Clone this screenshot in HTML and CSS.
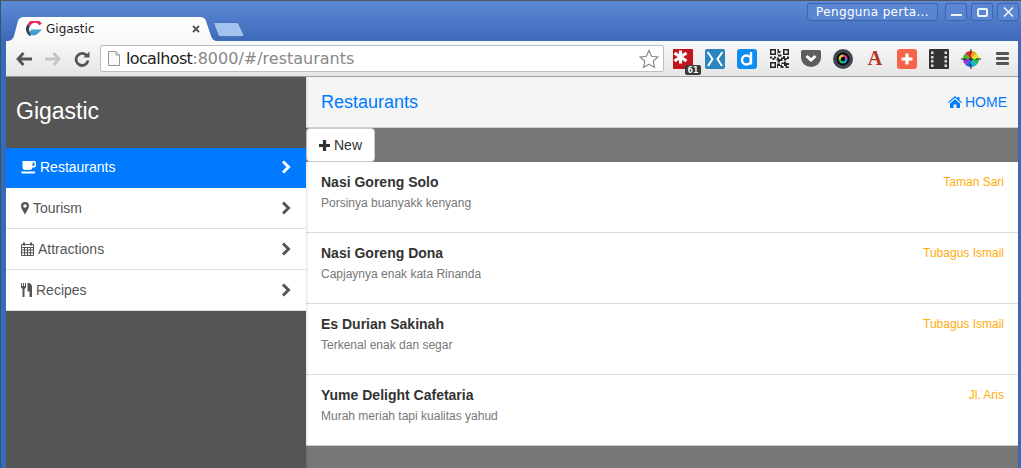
FILE: index.html
```html
<!DOCTYPE html>
<html lang="en">
<head>
  <meta charset="UTF-8">
  <meta name="viewport" content="width=device-width, initial-scale=1.0">
  <title>Gigastic</title>
  <link rel="stylesheet" href="styles.css">
</head>
<body>
  <div class="window">
    <div class="titlebar">
      <div class="tab">
        <svg class="tab-shape" width="212" height="24" viewBox="0 0 212 24">
          <defs>
            <linearGradient id="tabfill" x1="0" y1="0" x2="0" y2="1">
              <stop offset="0" stop-color="#ffffff"/>
              <stop offset="1" stop-color="#f8f8f8"/>
            </linearGradient>
          </defs>
          <path d="M0 24C5 24 7 22 8 19L12 4C13 1 15 0 18 0H194C197 0 199 1 200 4L205 19C206 22 208 24 212 24Z" fill="url(#tabfill)"/>
        </svg>
        <svg class="favicon" width="16" height="16" viewBox="0 0 16 16">
          <path d="M14.5 3.500A6.500 6.500 0 0 0 3 4" fill="none" stroke="#e8265e" stroke-width="3"/>
          <path d="M3 4A6.500 6.500 0 0 0 5 14" fill="none" stroke="#34405c" stroke-width="3"/>
          <path d="M5 8.500H16L12 12.500Q8 16 3.500 13Z" fill="#3f9fd0"/>
        </svg>
        <span class="tab-title">Gigastic</span>
        <svg class="tab-close" width="8" height="8" viewBox="0 0 8 8">
          <path d="M1 1L7 7M7 1L1 7" stroke="#555" stroke-width="1.8"/>
        </svg>
      </div>
      <svg class="new-tab" width="32" height="15" viewBox="0 0 32 15">
        <path d="M2 .5H23C25 .5 25.500 1 26 2.500L30.500 12C31 13.500 30.500 14.500 29 14.500H8C6 14.500 5.500 14 5 12.500L1 2.500C.5 1 .5 .5 2 .5Z" fill="#a3c3ee" stroke="#4a72b8"/>
      </svg>
      <div class="window-controls">
        <div class="user-button">Pengguna perta...</div>
        <div class="win-buttons">
          <div class="win-btn"><span class="win-min"></span></div>
          <div class="win-btn"><span class="win-max"></span></div>
          <div class="win-btn">
            <svg width="11" height="10" viewBox="0 0 11 10"><path d="M1 .5L10 9.500M10 .5L1 9.500" stroke="#eef3fb" stroke-width="1.6"/></svg>
          </div>
        </div>
      </div>
    </div>

    <div class="toolbar">
      <div class="nav-buttons">
        <svg width="16" height="14" viewBox="0 0 16 14"><path d="M7.500 1L2 7L7.500 13M2 7H16" fill="none" stroke="#555" stroke-width="2.8"/></svg>
        <svg width="16" height="14" viewBox="0 0 16 14"><path d="M8.500 1L14 7L8.500 13M14 7H0" fill="none" stroke="#c4c4c4" stroke-width="2.8"/></svg>
        <svg width="16" height="16" viewBox="0 0 16 16"><path d="M13 5A6 6 0 1 0 14 9.500" fill="none" stroke="#555" stroke-width="2.8"/><path d="M9.500 6.500H15.500V.5Z" fill="#555"/></svg>
      </div>
      <div class="address">
        <svg class="page-icon" width="12" height="15" viewBox="0 0 12 15"><path d="M.5 .5H8L11.500 4V14.500H.5Z M8 .5V4H11.500" fill="#fafafa" stroke="#999"/></svg>
        <span class="url"><span class="url-host">localhost</span>:8000/#/restaurants</span>
        <svg class="star" width="20" height="20" viewBox="0 0 20 20"><path d="M10 1.500L12.600 7.300L18.900 8L14.200 12.200L15.500 18.400L10 15.200L4.500 18.400L5.800 12.200L1.100 8L7.400 7.300Z" fill="#fff" stroke="#8a8a8a" stroke-width="1.2"/></svg>
      </div>
      <div class="extensions">
        <div class="ext">
          <svg width="20" height="20" viewBox="0 0 20 20"><rect width="20" height="20" rx="1" fill="#c0141f"/><path d="M7.500 1.500V14.500M1.500 4L13.500 12M13.500 4L1.500 12" stroke="#fff" stroke-width="3.2"/></svg>
          <span class="ext-badge">61</span>
        </div>
        <div class="ext">
          <svg width="20" height="20" viewBox="0 0 20 20"><rect width="20" height="20" rx="2" fill="#2b85bf"/><path d="M2.500 3L7.500 10L3 17M17.500 3L12.500 10L17 17" fill="none" stroke="#fff" stroke-width="2"/></svg>
        </div>
        <div class="ext">
          <svg width="20" height="20" viewBox="0 0 20 20"><rect width="20" height="20" rx="3" fill="#0d8df0"/><circle cx="9.500" cy="11" r="4.500" fill="none" stroke="#fff" stroke-width="2.4"/><path d="M14 3V15.500" stroke="#fff" stroke-width="2.4"/></svg>
        </div>
        <div class="ext">
          <svg width="19" height="19" viewBox="0 0 19 19"><rect width="19" height="19" fill="#f4f4f4"/><path d="M0 0H6V6H0Z M13 0H19V6H13Z M0 13H6V19H0Z" fill="#222"/><path d="M1.500 1.500H4.500V4.500H1.500Z M14.500 1.500H17.500V4.500H14.500Z M1.500 14.500H4.500V17.500H1.500Z" fill="#f4f4f4"/><path d="M7.500 0H9V2H10.500V4H8V5.500H11.500V7.500H8V6H7.500Z M0 7.500H2V9H4V7.500H6V9.500H4.500V11H2.500V9.500H0Z M7 8.500H9V10H11V8.500H13V7H15V9H17V7.500H19V10H16.500V11.500H14V10H12.500V12H10V13.500H7.500V11.500H6.500Z M14 12.500H16V14H19V16H17V17.500H19V19H15.500V17H14V15H12V17H13.500V19H10.500V17H8V19H7V14.500H10V16H11.500V13.500H14Z" fill="#2b2b2b"/></svg>
        </div>
        <div class="ext">
          <svg width="20" height="17" viewBox="0 0 20 17"><path d="M1.500 0H18.500A1.500 1.500 0 0 1 20 1.500V7.500A10 9.500 0 0 1 0 7.500V1.500A1.500 1.500 0 0 1 1.500 0Z" fill="#5d5d5d"/><path d="M5.500 6L10 10L14.500 6" fill="none" stroke="#fff" stroke-width="3"/></svg>
        </div>
        <div class="ext">
          <svg width="20" height="20" viewBox="0 0 20 20"><circle cx="10" cy="10" r="10" fill="#3f4650"/><circle cx="10" cy="10" r="6.500" fill="#0b0b10"/><path d="M10 5.500A4.500 4.500 0 0 1 14.500 10H10Z" fill="#e23ba0"/><path d="M14.500 10A4.500 4.500 0 0 1 10 14.500V10Z" fill="#1aa5c8"/><path d="M10 14.500A4.500 4.500 0 0 1 5.500 10H10Z" fill="#2bbf5a"/><path d="M5.500 10A4.500 4.500 0 0 1 10 5.500V10Z" fill="#e8d020"/><circle cx="10" cy="10" r="2.200" fill="#07070a"/></svg>
        </div>
        <div class="ext ext-letter">A</div>
        <div class="ext">
          <svg width="20" height="20" viewBox="0 0 20 20"><rect width="20" height="20" rx="3" fill="#f8634b"/><path d="M10 4.500V15.500M4.500 10H15.500" stroke="#fff" stroke-width="3.2"/></svg>
        </div>
        <div class="ext">
          <svg width="20" height="20" viewBox="0 0 20 20"><rect width="20" height="20" rx="1" fill="#333"/><path d="M2 2.500H4.500V5H2Z M2 7H4.500V9.500H2Z M2 11H4.500V13.500H2Z M2 15.500H4.500V18H2Z M15.500 2.500H18V5H15.500Z M15.500 7H18V9.500H15.500Z M15.500 11H18V13.500H15.500Z M15.500 15.500H18V18H15.500Z" fill="#ddd"/></svg>
        </div>
        <div class="ext">
          <svg width="20" height="20" viewBox="0 0 20 20"><path d="M10 10L10 2A8 8 0 0 1 15.700 4.300Z" fill="#f0a010"/><path d="M10 10L15.700 4.300A8 8 0 0 1 18 10Z" fill="#e8e020"/><path d="M10 10H18A8 8 0 0 1 15.700 15.700Z" fill="#1dbb4f"/><path d="M10 10L15.700 15.700A8 8 0 0 1 10 18Z" fill="#18b5c5"/><path d="M10 10V18A8 8 0 0 1 4.300 15.700Z" fill="#2560e0"/><path d="M10 10L4.300 15.700A8 8 0 0 1 2 10Z" fill="#9030d0"/><path d="M10 10H2A8 8 0 0 1 4.300 4.300Z" fill="#40c020"/><path d="M10 10L4.300 4.300A8 8 0 0 1 10 2Z" fill="#e02040"/><path d="M10 0V5M10 15V20M0 10H5M15 10H20M8 10H12M10 8V12" stroke="#222"/></svg>
        </div>
        <div class="ext ext-menu"><span></span><span></span><span></span></div>
      </div>
    </div>

    <div class="page">
      <aside class="sidebar">
        <div class="brand">Gigastic</div>
        <nav class="menu">
          <a class="menu-item active">
            <span class="menu-label">
              <svg class="icon" width="15" height="14" viewBox="0 0 15 14"><path d="M1.500 1H13A2 2 0 0 1 15 3V5.500A2 2 0 0 1 13 7.500H11.500A3 3 0 0 1 8.500 10H4.500A3 3 0 0 1 1.500 7Z M11.500 2.500V6H12.500A1 1 0 0 0 13.500 5V3.500A1 1 0 0 0 12.500 2.500Z M0 11.500H14.500L13.500 13.500H1Z" fill="currentColor" fill-rule="evenodd"/></svg>
              Restaurants
            </span>
            <svg class="chevron" width="10" height="14" viewBox="0 0 10 14"><path d="M2 1.500L7.500 7L2 12.500" fill="none" stroke="currentColor" stroke-width="3"/></svg>
          </a>
          <a class="menu-item">
            <span class="menu-label">
              <svg class="icon" width="8" height="13" viewBox="0 0 8 13"><path d="M4 0A4 4 0 0 1 8 4C8 6.500 5 10 4 13C3 10 0 6.500 0 4A4 4 0 0 1 4 0ZM4 2.200A1.800 1.800 0 1 0 4 5.800A1.800 1.800 0 1 0 4 2.200Z" fill="currentColor" fill-rule="evenodd"/></svg>
              Tourism
            </span>
            <svg class="chevron" width="10" height="14" viewBox="0 0 10 14"><path d="M2 1.500L7.500 7L2 12.500" fill="none" stroke="currentColor" stroke-width="3"/></svg>
          </a>
          <a class="menu-item">
            <span class="menu-label">
              <svg class="icon" width="13" height="14" viewBox="0 0 13 14"><path d="M.5 2.500H12.500V13.500H.5Z M.5 5.500H12.500M.5 8H12.500M.5 10.800H12.500M3.500 5.500V13.500M6.500 5.500V13.500M9.500 5.500V13.500" fill="none" stroke="currentColor"/><path d="M3 .5V3.500M10 .5V3.500" stroke="currentColor" stroke-width="2"/></svg>
              Attractions
            </span>
            <svg class="chevron" width="10" height="14" viewBox="0 0 10 14"><path d="M2 1.500L7.500 7L2 12.500" fill="none" stroke="currentColor" stroke-width="3"/></svg>
          </a>
          <a class="menu-item">
            <span class="menu-label">
              <svg class="icon" width="11" height="14" viewBox="0 0 11 14"><path d="M0 0H1V3H2V0H3V3H4V0H5V4.500L3.500 6V14H1.500V6L0 4.500Z M6.500 5V0H7C10 0 11 2 11 4V14H8.500V8.500H6.500Z" fill="currentColor"/></svg>
              Recipes
            </span>
            <svg class="chevron" width="10" height="14" viewBox="0 0 10 14"><path d="M2 1.500L7.500 7L2 12.500" fill="none" stroke="currentColor" stroke-width="3"/></svg>
          </a>
        </nav>
      </aside>

      <main class="content">
        <header class="content-header">
          <h1>Restaurants</h1>
          <a class="home-link">
            <svg class="icon" width="14" height="12" viewBox="0 0 14 12"><path d="M7 0L9.500 2.200V1H11.500V4L14 6.200L13.200 7L7 1.700L.8 7L0 6.200Z M2 7.500L7 3.200L12 7.500V12H8.500V8.500H5.500V12H2Z" fill="currentColor"/></svg>
            HOME
          </a>
        </header>
        <div class="actions">
          <button class="btn-new" type="button">
            <svg class="icon" width="11" height="11" viewBox="0 0 11 11"><path d="M5.500 0V11M0 5.500H11" stroke="currentColor" stroke-width="3.2"/></svg>
            New
          </button>
        </div>
        <ul class="list">
          <li class="list-row">
            <div>
              <h2>Nasi Goreng Solo</h2>
              <p>Porsinya buanyakk kenyang</p>
            </div>
            <span class="place">Taman Sari</span>
          </li>
          <li class="list-row">
            <div>
              <h2>Nasi Goreng Dona</h2>
              <p>Capjaynya enak kata Rinanda</p>
            </div>
            <span class="place">Tubagus Ismail</span>
          </li>
          <li class="list-row">
            <div>
              <h2>Es Durian Sakinah</h2>
              <p>Terkenal enak dan segar</p>
            </div>
            <span class="place">Tubagus Ismail</span>
          </li>
          <li class="list-row">
            <div>
              <h2>Yume Delight Cafetaria</h2>
              <p>Murah meriah tapi kualitas yahud</p>
            </div>
            <span class="place">Jl. Aris</span>
          </li>
        </ul>
      </main>
    </div>
  </div>
</body>
</html>
```

FILE: styles.css
```css
* {
  box-sizing: border-box;
}

html, body {
  margin: 0;
  padding: 0;
  height: 100%;
  overflow: hidden;
}

body {
  font-family: "Liberation Sans", Arial, sans-serif;
  background: #2f5ba8;
}

.window {
  display: flex;
  flex-direction: column;
  width: 1021px;
  height: 468px;
  padding: 0 3px 0 5px;
  border-left: 1px solid #2a5a70;
  background: #3c68b8;
}

/* title bar */
.titlebar {
  position: relative;
  display: flex;
  flex: 0 0 41px;
  align-items: flex-end;
  margin: 0 -3px 0 -5px;
  padding-left: 5px;
  border-top: 1px solid #555;
  background: linear-gradient(#5d8ad6, #3d69ba);
}

.tab {
  display: flex;
  position: relative;
  align-items: center;
  width: 212px;
  height: 24px;
  padding: 0 18px 1px 20px;
}

.tab-shape {
  position: absolute;
  left: 0;
  top: 0;
}

.favicon, .tab-title, .tab-close {
  position: relative;
}

.tab-title {
  flex: 1;
  margin-left: 4px;
  font: 12px "DejaVu Sans", sans-serif;
  color: #222;
}

.new-tab {
  margin: 0 0 4px -5px;
}

.window-controls {
  position: absolute;
  right: 2px;
  top: 2px;
  display: flex;
  gap: 7px;
}

.user-button {
  width: 131px;
  height: 18px;
  border: 1px solid #3a64ad;
  border-radius: 2px 2px 4px 4px;
  background: #5a85d0;
  color: #fff;
  font: 12px/16px "DejaVu Sans", sans-serif;
  letter-spacing: .35px;
  text-align: center;
}

.win-buttons {
  display: flex;
  gap: 4px;
}

.win-btn {
  display: flex;
  align-items: center;
  justify-content: center;
  width: 22px;
  height: 18px;
  border: 1px solid #3a64ad;
  border-radius: 2px 2px 3px 3px;
  background: #5a85d0;
}

.win-min {
  width: 11px;
  height: 2px;
  margin-top: 5px;
  background: #eef3fb;
}

.win-max {
  width: 11px;
  height: 9px;
  border: 2px solid #eef3fb;
  border-radius: 2px;
}

/* browser toolbar */
.toolbar {
  display: flex;
  flex: 0 0 36px;
  align-items: center;
  border-bottom: 1px solid #a0a0a0;
  background: linear-gradient(#f8f8f8, #e6e6e6);
}

.nav-buttons {
  display: flex;
  align-items: center;
  gap: 13px;
  width: 94px;
  padding-left: 10px;
}

.address {
  display: flex;
  align-items: center;
  width: 565px;
  height: 27px;
  padding: 0 4px 0 7px;
  border: 1px solid #bcbcbc;
  border-radius: 2px;
  background: #fff;
}

.page-icon {
  flex: none;
}

.url {
  flex: 1;
  margin-left: 6px;
  font: 16px "DejaVu Sans", sans-serif;
  color: #888;
}

.url-host {
  color: #222;
  letter-spacing: -.6px;
}

.extensions {
  display: flex;
  align-items: center;
}

.ext {
  position: relative;
  display: flex;
  align-items: center;
  justify-content: center;
  width: 32px;
  height: 24px;
}

.ext:first-child {
  margin-left: 3px;
}

.ext-badge {
  position: absolute;
  right: -2px;
  bottom: -4px;
  width: 16px;
  height: 10px;
  border-radius: 2px;
  background: #3a3a3a;
  color: #fff;
  font: bold 9px/10px "DejaVu Sans Mono", monospace;
  text-align: center;
}

.ext-letter {
  color: #b5321f;
  font: bold 20px "Liberation Serif", serif;
}

.ext-menu {
  flex-direction: column;
  gap: 2px;
  margin-left: -1px;
}

.ext-menu span {
  width: 13px;
  height: 3px;
  border-radius: 1px;
  background: #555;
}

/* app */
.page {
  display: flex;
  flex: 1;
  min-height: 0;
}

.sidebar {
  position: relative;
  flex: 0 0 300px;
  background: #555;
  box-shadow: 1px 0 2px rgba(0, 0, 0, .12);
}

.brand {
  height: 71px;
  padding-left: 10px;
  color: #fff;
  font-size: 23px;
  line-height: 69px;
}

.menu {
  display: flex;
  flex-direction: column;
  background: #fff;
}

.menu-item {
  display: flex;
  align-items: center;
  justify-content: space-between;
  height: 41px;
  padding: 0 15px;
  border-bottom: 1px solid #ddd;
  color: #555;
  font-size: 14px;
}

.menu-item.active {
  height: 40px;
  padding-bottom: 2px;
  border-bottom: 0;
  background: #007aff;
  color: #fff;
}

.menu-label {
  display: flex;
  align-items: center;
  gap: 4px;
}

.icon {
  flex: none;
}

.content {
  display: flex;
  flex: 1;
  flex-direction: column;
  background: #777;
}

.content-header {
  display: flex;
  align-items: center;
  justify-content: space-between;
  height: 51px;
  padding: 0 11px 0 15px;
  border-bottom: 1px solid #ccc;
  background: #f5f5f5;
}

h1 {
  margin: 0;
  color: #007aff;
  font-size: 18px;
  font-weight: normal;
}

.home-link {
  display: flex;
  align-items: center;
  gap: 3px;
  color: #007aff;
  font-size: 14px;
}

.actions {
  height: 34px;
}

.btn-new {
  display: flex;
  align-items: center;
  gap: 4px;
  width: 69px;
  height: 34px;
  padding: 0 0 0 12px;
  border: 1px solid #ccc;
  border-radius: 4px;
  background: #fff;
  color: #333;
  font: 14px "Liberation Sans", sans-serif;
}

.list {
  margin: 0;
  padding: 0;
  list-style: none;
  border-bottom: 1px solid #ccc;
  background: #fff;
}

.list-row {
  display: flex;
  justify-content: space-between;
  height: 71px;
  padding: 12px 14px 0 15px;
  border-top: 1px solid #ddd;
}

.list-row:first-child {
  height: 70px;
  border-top: 0;
}

h2 {
  margin: 0 0 4px;
  color: #333;
  font-size: 14px;
  line-height: 17px;
}

p {
  margin: 0;
  color: #777;
  font-size: 12px;
  line-height: 17px;
}

.place {
  color: #ffac0a;
  font-size: 12px;
  line-height: 17px;
}
```
